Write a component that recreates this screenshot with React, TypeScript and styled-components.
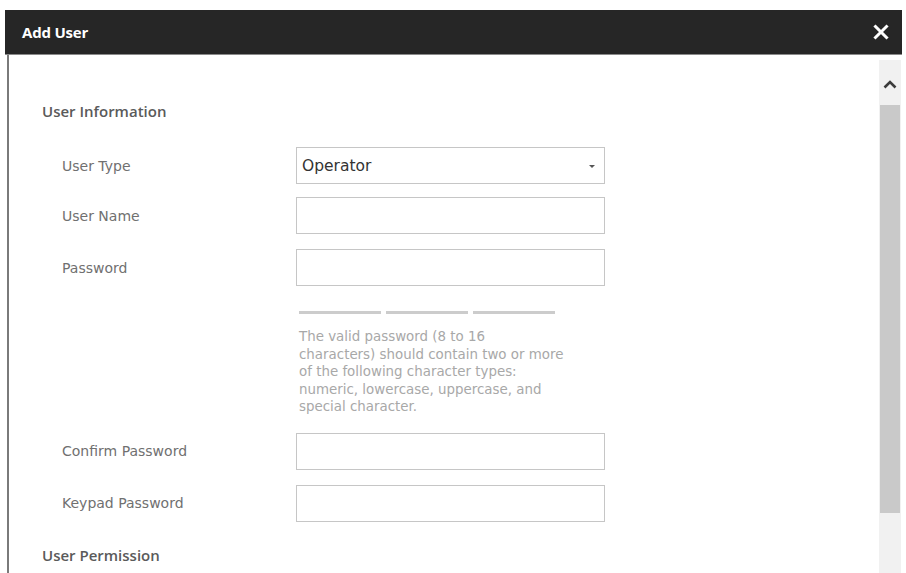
import styled, { createGlobalStyle } from "styled-components";

const GlobalStyle = createGlobalStyle`
	html, body {
		margin: 0;
		padding: 0;
		background: #ffffff;
	}
	* {
		box-sizing: border-box;
	}
`;

const LABEL_FONT = `"DejaVu Sans", "Liberation Sans", sans-serif`;
const TITLE_FONT = `"Open Sans", "Liberation Sans", sans-serif`;

const Page = styled.div`
	height: 573px;
	padding: 10px 4px 0 5px;
	overflow: hidden;
`;

const Dialog = styled.div`
	display: flex;
	flex-direction: column;
	height: 100%;
`;

const Header = styled.div`
	display: flex;
	align-items: center;
	justify-content: space-between;
	height: 45px;
	padding: 0 11px 0 17px;
	background: #262626;
	border-bottom: 1px solid #8a8a8a;
	flex-shrink: 0;
`;

const HeaderTitle = styled.span`
	font-family: ${TITLE_FONT};
	font-weight: 700;
	font-size: 15px;
	color: #ffffff;
	letter-spacing: -0.2px;
`;

const CloseButton = styled.button`
	display: flex;
	align-items: center;
	justify-content: center;
	width: 20px;
	height: 20px;
	padding: 0;
	border: none;
	background: transparent;
	cursor: pointer;
`;

const Body = styled.div`
	display: flex;
	flex: 1;
	min-height: 0;
	margin-left: 2px;
	border-left: 2px solid #7a7a7a;
`;

const Content = styled.div`
	flex: 1;
	padding: 46px 0 0 33px;
	overflow: hidden;
`;

const SectionTitle = styled.div<{ $gap: number }>`
	font-family: ${TITLE_FONT};
	font-weight: 600;
	font-size: 15px;
	line-height: 20px;
	color: #5a5a5a;
	margin-bottom: ${(p) => p.$gap}px;
`;

const FormRow = styled.div<{ $gap?: number }>`
	display: grid;
	grid-template-columns: 234px 309px;
	align-items: center;
	padding-left: 20px;
	margin-bottom: ${(p) => p.$gap ?? 15}px;
`;

const Label = styled.span`
	font-family: ${LABEL_FONT};
	font-size: 14px;
	color: #707070;
`;

const Field = styled.div`
	position: relative;
	display: flex;
	align-items: center;
	height: 37px;
	padding: 0 5px;
	border: 1.5px solid #c6c6c6;
	background: #ffffff;
	font-family: ${LABEL_FONT};
	font-size: 15.5px;
	color: #333333;
`;

const Caret = styled.span`
	position: absolute;
	right: 9px;
	top: 17px;
	width: 0;
	height: 0;
	border-left: 3px solid transparent;
	border-right: 3px solid transparent;
	border-top: 3px solid #555555;
`;

const Hint = styled.div`
	grid-column: 2;
	padding: 25px 0 0 3px;
`;

const Strength = styled.div`
	display: grid;
	grid-template-columns: repeat(3, 82px);
	gap: 5px;
	margin-bottom: 14px;
`;

const StrengthBar = styled.div`
	height: 3px;
	background: #cccccc;
`;

const HintText = styled.p`
	margin: 0;
	width: 300px;
	font-family: ${LABEL_FONT};
	font-size: 13.4px;
	line-height: 17.5px;
	color: #a8a8a8;
`;

const ScrollBar = styled.div`
	display: flex;
	flex-direction: column;
	width: 22px;
	margin-top: 5px;
	margin-right: 1px;
	background: #f1f1f1;
	flex-shrink: 0;
`;

const ScrollArrow = styled.div`
	display: flex;
	align-items: center;
	justify-content: center;
	height: 45px;
	padding-top: 4px;
`;

const ScrollThumb = styled.div`
	height: 408px;
	margin: 0 1px;
	background: #c9c9c9;
`;

const fields = [
	{ label: "User Type", value: "Operator", select: true, gap: 13 },
	{ label: "User Name", gap: 15 },
	{ label: "Password", gap: 0 },
];

const extraFields = [
	{ label: "Confirm Password", gap: 15 },
	{ label: "Keypad Password", gap: 23 },
];

const App = (): JSX.Element => (
	<>
		<GlobalStyle />
		<Page>
			<Dialog>
				<Header>
					<HeaderTitle>Add User</HeaderTitle>
					<CloseButton aria-label="Close">
						<svg width="16" height="16" viewBox="0 0 16 16">
							<path
								d="M2.5 2.5 L13.5 13.5 M13.5 2.5 L2.5 13.5"
								stroke="#ffffff"
								strokeWidth="3"
								strokeLinecap="square"
							/>
						</svg>
					</CloseButton>
				</Header>
				<Body>
					<Content>
						<SectionTitle $gap={26}>User Information</SectionTitle>
						{fields.map((f) => (
							<FormRow key={f.label} $gap={f.gap}>
								<Label>{f.label}</Label>
								<Field>
									{f.value}
									{f.select && <Caret />}
								</Field>
							</FormRow>
						))}
						<FormRow $gap={17}>
							<Hint>
								<Strength>
									<StrengthBar />
									<StrengthBar />
									<StrengthBar />
								</Strength>
								<HintText>
									The valid password (8 to 16
									<br />
									characters) should contain two or more
									<br />
									of the following character types:
									<br />
									numeric, lowercase, uppercase, and
									<br />
									special character.
								</HintText>
							</Hint>
						</FormRow>
						{extraFields.map((f) => (
							<FormRow key={f.label} $gap={f.gap}>
								<Label>{f.label}</Label>
								<Field />
							</FormRow>
						))}
						<SectionTitle $gap={0}>User Permission</SectionTitle>
					</Content>
					<ScrollBar>
						<ScrollArrow>
							<svg width="14" height="9" viewBox="0 0 14 9">
								<path
									d="M1.5 7.5 L7 2 L12.5 7.5"
									fill="none"
									stroke="#3c3c3c"
									strokeWidth="2.6"
								/>
							</svg>
						</ScrollArrow>
						<ScrollThumb />
					</ScrollBar>
				</Body>
			</Dialog>
		</Page>
	</>
);

export default App;
